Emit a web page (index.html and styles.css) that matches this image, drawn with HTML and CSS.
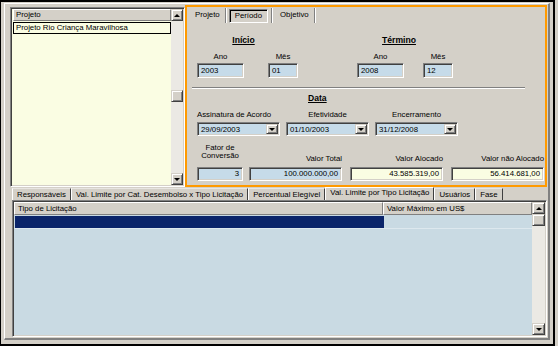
FILE: index.html
```html
<!DOCTYPE html>
<html>
<head>
    <meta charset="utf-8">
    <title>Projeto - Período</title>
    <link rel="stylesheet" href="styles.css">
</head>
<body>
<div class="window">
    <div class="client">
        <div class="topRow">
            <!-- lista de projetos -->
            <div class="listBox">
                <div class="listMain">
                    <div class="listHead">Projeto</div>
                    <div class="listItem">Projeto Rio Criança Maravilhosa</div>
                </div>
                <div class="vScroll">
                    <div class="sbBtn"><span class="arrowUp"></span></div>
                    <div class="sbTrack"><div class="sbThumb listThumb"></div></div>
                    <div class="sbBtn"><span class="arrowDown"></span></div>
                </div>
            </div>

            <div class="focusFrame">
                <div class="tabBar">
                    <span class="tab">Projeto</span>
                    <span class="tab active"><span class="pressed">Período</span></span>
                    <span class="tab">Objetivo</span>
                </div>
                <div class="tabPage">
                    <div class="periodRow">
                        <div class="group inicio">
                            <div class="groupTitle">Início</div>
                            <div class="fields">
                                <div class="field wYear"><div class="label">Ano</div><div class="edit blue">2003</div></div>
                                <div class="field wMonth"><div class="label">Mês</div><div class="edit blue">01</div></div>
                            </div>
                        </div>
                        <div class="group termino">
                            <div class="groupTitle">Término</div>
                            <div class="fields">
                                <div class="field wYear"><div class="label">Ano</div><div class="edit blue">2008</div></div>
                                <div class="field wMonth"><div class="label">Mês</div><div class="edit blue">12</div></div>
                            </div>
                        </div>
                    </div>

                    <div class="separator"></div>

                    <div class="dataTitle">Data</div>
                    <div class="dateRow">
                        <div class="field wCombo first">
                            <div class="label">Assinatura de Acordo</div>
                            <div class="combo"><span class="comboText">29/09/2003</span><span class="comboBtn"><span class="arrowDown"></span></span></div>
                        </div>
                        <div class="field wCombo">
                            <div class="label">Efetividade</div>
                            <div class="combo"><span class="comboText">01/10/2003</span><span class="comboBtn"><span class="arrowDown"></span></span></div>
                        </div>
                        <div class="field wCombo">
                            <div class="label">Encerramento</div>
                            <div class="combo"><span class="comboText">31/12/2008</span><span class="comboBtn"><span class="arrowDown"></span></span></div>
                        </div>
                    </div>

                    <div class="valueRow">
                        <div class="field wFator">
                            <div class="label twoLines">Fator de<br>Conversão</div>
                            <div class="edit blue num">3</div>
                        </div>
                        <div class="field wValue right">
                            <div class="label">Valor Total</div>
                            <div class="edit blue num">100.000.000,00</div>
                        </div>
                        <div class="field wValue right">
                            <div class="label">Valor Alocado</div>
                            <div class="edit yellow num">43.585.319,00</div>
                        </div>
                        <div class="field wValue right">
                            <div class="label">Valor não Alocado</div>
                            <div class="edit yellow num">56.414.681,00</div>
                        </div>
                    </div>
                </div>
            </div>
        </div>

        <div class="bottomArea">
            <div class="tabStrip">
                <span class="btab">Responsáveis</span>
                <span class="btab">Val. Limite por Cat. Desembolso x Tipo Licitação</span>
                <span class="btab">Percentual Elegível</span>
                <span class="btab active">Val. Limite por Tipo Licitação</span>
                <span class="btab">Usuários</span>
                <span class="btab">Fase</span>
            </div>
            <div class="grid">
                <div class="gridMain">
                    <div class="gridHead">
                        <div class="hCell col1">Tipo de Licitação</div>
                        <div class="hCell col2">Valor Máximo em US$</div>
                    </div>
                    <div class="gridRow">
                        <div class="cell col1 current"></div>
                        <div class="cell col2"></div>
                    </div>
                </div>
                <div class="vScroll gridScroll">
                    <div class="sbBtn"><span class="arrowUp"></span></div>
                    <div class="sbTrack"><div class="sbThumb"></div></div>
                    <div class="sbBtn"><span class="arrowDown"></span></div>
                </div>
            </div>
        </div>
    </div>
</div>
</body>
</html>
```

FILE: styles.css
```css
body {
    margin: 0px;
    background-color: #d4d0c8;
    color: #000;
    font: 7.8px "Liberation Sans", Arial, sans-serif;
}

.window {
    box-sizing: border-box;
    width: 555px;
    height: 346px;
    border-style: solid;
    border-color: #000;
    border-width: 2px 2px 2px 1px;
    padding: 1px 3px 4px 3px;
}

.client {
    box-sizing: border-box;
    height: 100%;
    border-style: solid;
    border-width: 1px 2px 2px 1px;
    border-color: #fff #808080 #808080 #fff;
    display: flex;
    flex-direction: column;
}

.topRow {
    box-sizing: border-box;
    display: flex;
    height: 183px;
    padding: 1px 0px 0px 5px;
}

/* sunken 3d box, used by lists, edits and grid */
.listBox, .edit, .combo, .grid, .pressed {
    box-sizing: border-box;
    border: 1px solid;
    border-color: #808080 #fff #fff #808080;
    box-shadow: inset 1px 1px 0px #404040, inset -1px -1px 0px #d4d0c8;
}

.listBox {
    display: flex;
    width: 175px;
    height: 180px;
    margin-top: 2px;
    padding: 1px;
}

.listMain {
    flex: 1;
    background-color: #fafde3;
}

.listHead {
    box-sizing: border-box;
    height: 12px;
    margin-left: 1px;
    padding-left: 2px;
    line-height: 10px;
    background-color: #d4d0c8;
    border: 1px solid;
    border-color: #fff #808080 #808080 #fff;
}

.listItem {
    box-sizing: border-box;
    height: 12px;
    margin: 1px 0px 0px 1px;
    padding-left: 2px;
    line-height: 10px;
    border: 1px solid #000;
}

/* scrollbars */
.vScroll {
    display: flex;
    flex-direction: column;
    width: 12px;
    background-color: #ebe9e4;
}

.sbBtn, .sbThumb, .comboBtn {
    box-sizing: border-box;
    display: flex;
    align-items: center;
    justify-content: center;
    height: 12px;
    background-color: #d4d0c8;
    border: 1px solid;
    border-color: #d4d0c8 #404040 #404040 #d4d0c8;
    box-shadow: inset 1px 1px 0px #fff, inset -1px -1px 0px #808080;
}

.sbTrack {
    flex: 1;
}

.listThumb {
    margin-top: 69px;
}

.arrowUp, .arrowDown {
    width: 0px;
    height: 0px;
    border-left: 3px solid transparent;
    border-right: 3px solid transparent;
}

.arrowUp {
    border-bottom: 3px solid #000;
}

.arrowDown {
    border-top: 3px solid #000;
}

/* painel com foco */
.focusFrame {
    box-sizing: border-box;
    width: 362px;
    height: 182px;
    border: 2px solid #ff9a00;
}

.tabBar {
    display: flex;
    align-items: flex-end;
    height: 16px;
    padding-left: 3px;
}

/* abas em estilo botao plano, com separador */
.tab {
    height: 15px;
    margin-right: 3px;
    padding: 0px 5px;
    line-height: 14px;
    border-right: 1px solid #808080;
    box-shadow: 1px 0px 0px #fff;
}

.tab.active {
    display: flex;
    align-items: flex-end;
    padding: 0px 3px 0px 0px;
}

.pressed {
    height: 14px;
    padding: 0px 5px;
    line-height: 12px;
    box-shadow: inset 1px 1px 0px #000;
    border-color: #808080 #fff #fff #808080;
}

.periodRow {
    display: flex;
    margin-top: 12px;
    padding-left: 10px;
}

.groupTitle, .dataTitle {
    height: 10px;
    line-height: 10px;
    font-size: 8.6px;
    font-weight: bold;
    text-decoration: underline;
}

.groupTitle {
    text-align: center;
}

.inicio .groupTitle {
    padding-right: 8px;
}

.termino {
    margin-left: 59px;
}

.termino .groupTitle {
    padding-right: 12px;
}

.fields {
    display: flex;
    margin-top: 7px;
}

.inicio .fields {
    gap: 24px;
}

.termino .fields {
    gap: 19px;
}

.field {
    display: flex;
    flex-direction: column;
}

.label {
    line-height: 10px;
    text-align: center;
    white-space: nowrap;
}

.wYear { width: 47px; }
.wMonth { width: 30px; }
.wCombo { width: 83px; }
.wFator { width: 46px; }
.wValue { width: 93px; }

.edit {
    height: 15px;
    margin-top: 1px;
    padding: 0px 3px;
    line-height: 13px;
}

.blue { background-color: #c6dbe9; }
.yellow { background-color: #fafde3; }

.num {
    text-align: right;
}

.separator {
    width: 333px;
    margin: 9px 0px 0px 5px;
    border-top: 1px solid #808080;
    border-bottom: 1px solid #fff;
}

.dataTitle {
    margin-top: 4px;
    padding-left: 121px;
}

.dateRow {
    display: flex;
    gap: 6px;
    margin-top: 7px;
    padding-left: 10px;
}

.dateRow .first .label {
    text-align: left;
}

.combo {
    display: flex;
    align-items: center;
    height: 14px;
    margin-top: 2px;
    padding: 1px;
    background-color: #c6dbe9;
}

.comboText {
    flex: 1;
    padding-left: 2px;
}

.comboBtn {
    width: 12px;
    height: 10px;
}

.valueRow {
    display: flex;
    align-items: flex-end;
    gap: 8px;
    margin-top: 8px;
    padding-left: 10px;
}

.valueRow .field:first-child {
    margin-right: -2px;
}

.valueRow .label {
    margin-bottom: 2px;
}

.valueRow .label.twoLines {
    line-height: 8px;
    margin-bottom: 6px;
}

.valueRow .right .label {
    text-align: right;
}

.valueRow .edit {
    height: 14px;
    line-height: 12px;
}

/* parte de baixo */
.bottomArea {
    flex: 1;
    display: flex;
    flex-direction: column;
    padding: 0px 1px 1px 7px;
}

.tabStrip {
    display: flex;
    align-items: flex-end;
    height: 13px;
}

.btab {
    box-sizing: border-box;
    height: 12px;
    padding: 0px 4px;
    line-height: 11px;
    white-space: nowrap;
    border-style: solid;
    border-width: 1px 1px 0px 1px;
    border-color: #e8e6e2 #404040 #d4d0c8 #fff;
}

.btab.active {
    height: 13px;
    line-height: 10px;
    border-color: #fff #404040 #d4d0c8 #fff;
}

.grid {
    flex: 1;
    display: flex;
    padding: 1px;
}

.gridMain {
    flex: 1;
    background-color: #c9dae3;
}

.gridScroll {
    width: 13px;
}

.gridHead, .gridRow {
    display: flex;
}

.col1 { width: 369px; }
.col2 { flex: 1; }

.hCell {
    box-sizing: border-box;
    height: 13px;
    padding-left: 3px;
    line-height: 11px;
    background-color: #d4d0c8;
    border: 1px solid;
    border-color: #fff #808080 #808080 #fff;
}

.gridRow {
    height: 13px;
    border-bottom: 1px solid #dde8ee;
}

.cell {
    box-sizing: border-box;
    height: 12px;
    margin-top: 1px;
}

.cell.current {
    margin-left: 1px;
    margin-right: 1px;
    background-color: #0a246a;
}
```
